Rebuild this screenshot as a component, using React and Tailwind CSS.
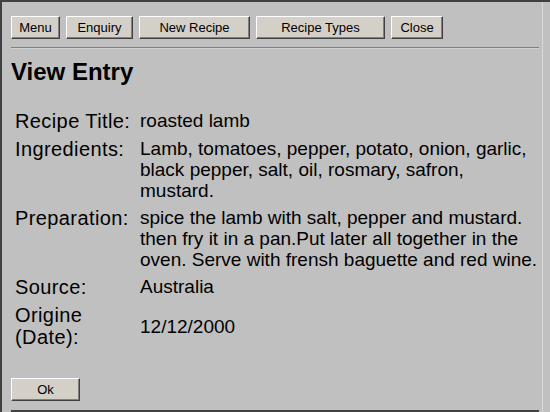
import React from "react";

const navButtons = [
  { label: "Menu", w: "w-[49px]" },
  { label: "Enquiry", w: "w-[67px]" },
  { label: "New Recipe", w: "w-[111px]" },
  { label: "Recipe Types", w: "w-[129px]" },
  { label: "Close", w: "w-[52px]" },
];

// lines broken as in the original page
const rows = [
  { label: "Recipe Title:", lines: ["roasted lamb"] },
  {
    label: "Ingredients:",
    lines: [
      "Lamb, tomatoes, pepper, potato, onion, garlic,",
      "black pepper, salt, oil, rosmary, safron,",
      "mustard.",
    ],
  },
  {
    label: "Preparation:",
    lines: [
      "spice the lamb with salt, pepper and mustard.",
      "then fry it in a pan.Put later all together in the",
      "oven. Serve with frensh baguette and red wine.",
    ],
  },
  { label: "Source:", lines: ["Australia"] },
];

function WinButton({ children, className = "" }) {
  return (
    <button
      className={`h-[23px] bg-[#d4d0c8] text-[13px] text-black border border-t-white border-l-white border-r-[#404040] border-b-[#404040] shadow-[inset_-1px_-1px_0_#808080] ${className}`}
    >
      {children}
    </button>
  );
}

export default function App() {
  return (
    <div
      className="w-[550px] h-[412px] overflow-hidden bg-[#c0c0c0] border-t-2 border-l-2 border-[#404040] text-black flex"
      style={{ fontFamily: '"Liberation Sans", Arial, sans-serif' }}
    >
      <div className="w-[541px] pl-[9px] pt-[14px] border-r border-[#d8d8d8] flex flex-col">
        {/* top buttons */}
        <div className="flex gap-[6px]">
          {navButtons.map((b) => (
            <WinButton key={b.label} className={b.w}>
              {b.label}
            </WinButton>
          ))}
        </div>

        <div className="mt-[8px] w-[528px] border-t border-[#808080] border-b border-b-[#d0d0d0]" />

        <h1 className="mt-[9px] text-[24px] leading-[28px] font-bold">View Entry</h1>

        {/* entry details */}
        <div className="mt-[24px] w-[528px] pl-[4px] grid grid-cols-[125px_1fr] gap-y-[6px]">
          {rows.map((r) => (
            <React.Fragment key={r.label}>
              <div className="text-[20px] leading-[22px] tracking-[0.4px]">{r.label}</div>
              <div className="text-[19px] leading-[21px] whitespace-nowrap">
                {r.lines.map((l) => (
                  <div key={l}>{l}</div>
                ))}
              </div>
            </React.Fragment>
          ))}

          <div className="text-[20px] leading-[22px] tracking-[0.4px]">
            Origine
            <br />
            (Date):
          </div>
          <div className="self-center text-[19px] leading-[21px]">12/12/2000</div>
        </div>

        <div className="mt-[29px]">
          <WinButton className="w-[69px]">Ok</WinButton>
        </div>

        <div className="mt-auto w-[528px] border-t-2 border-[#404040]" />
      </div>
    </div>
  );
}
